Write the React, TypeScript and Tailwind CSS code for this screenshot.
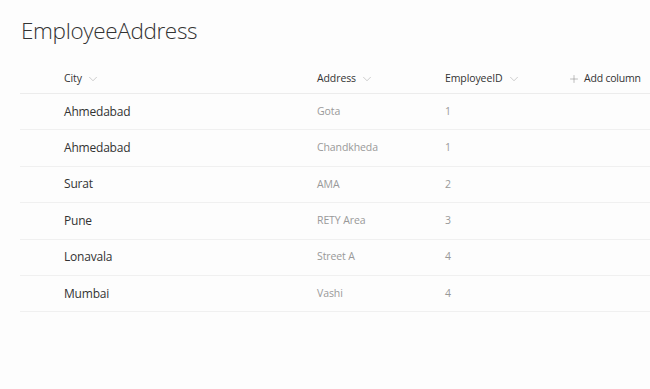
import { ChevronDown, Plus } from "lucide-react";

const rows = [
  { city: "Ahmedabad", address: "Gota", id: "1" },
  { city: "Ahmedabad", address: "Chandkheda", id: "1" },
  { city: "Surat", address: "AMA", id: "2" },
  { city: "Pune", address: "RETY Area", id: "3" },
  { city: "Lonavala", address: "Street A", id: "4" },
  { city: "Mumbai", address: "Vashi", id: "4" },
];

const cols = "grid grid-cols-[297px_128px_126px_1fr]";

function HeaderCell({ label }: { label: string }) {
  return (
    <div className="flex items-center gap-1 text-[10.5px] tracking-[-0.1px] text-[#333] whitespace-nowrap">
      <span>{label}</span>
      <ChevronDown className="w-3.5 h-3.5 text-[#b0b0b0]" strokeWidth={1.1} />
    </div>
  );
}

export default function App() {
  return (
    <div
      className="w-[650px] h-[389px] bg-[#fdfdfd] pl-5"
      style={{ fontFamily: '"Open Sans", "Noto Sans", sans-serif' }}
    >
      <h1 className="pt-[15px] pl-px text-[22.5px] font-light text-[#333] leading-8 tracking-[-0.35px]">
        EmployeeAddress
      </h1>
      <div className={`${cols} h-[30px] mt-[17px] items-center border-b border-[#ececec]`}>
        <div className="pl-[44px]">
          <HeaderCell label="City" />
        </div>
        <HeaderCell label="Address" />
        <HeaderCell label="EmployeeID" />
        <div className="-ml-[3px] flex items-center gap-1 text-[10.5px] tracking-[-0.2px] text-[#333] whitespace-nowrap">
          <Plus className="w-3 h-3 text-[#8a8a8a]" strokeWidth={1.1} />
          <span>Add column</span>
        </div>
      </div>
      {rows.map((r, i) => (
        <div
          key={i}
          className={`${cols} h-[36.4px] items-center border-b border-[#f0f0f0]`}
        >
          <div className="pl-[44px] text-[12px] tracking-[-0.2px] text-[#333]">{r.city}</div>
          <div className="text-[10.5px] tracking-[-0.1px] text-[#999]">{r.address}</div>
          <div className="text-[10.5px] text-[#999]">{r.id}</div>
          <div />
        </div>
      ))}
    </div>
  );
}
